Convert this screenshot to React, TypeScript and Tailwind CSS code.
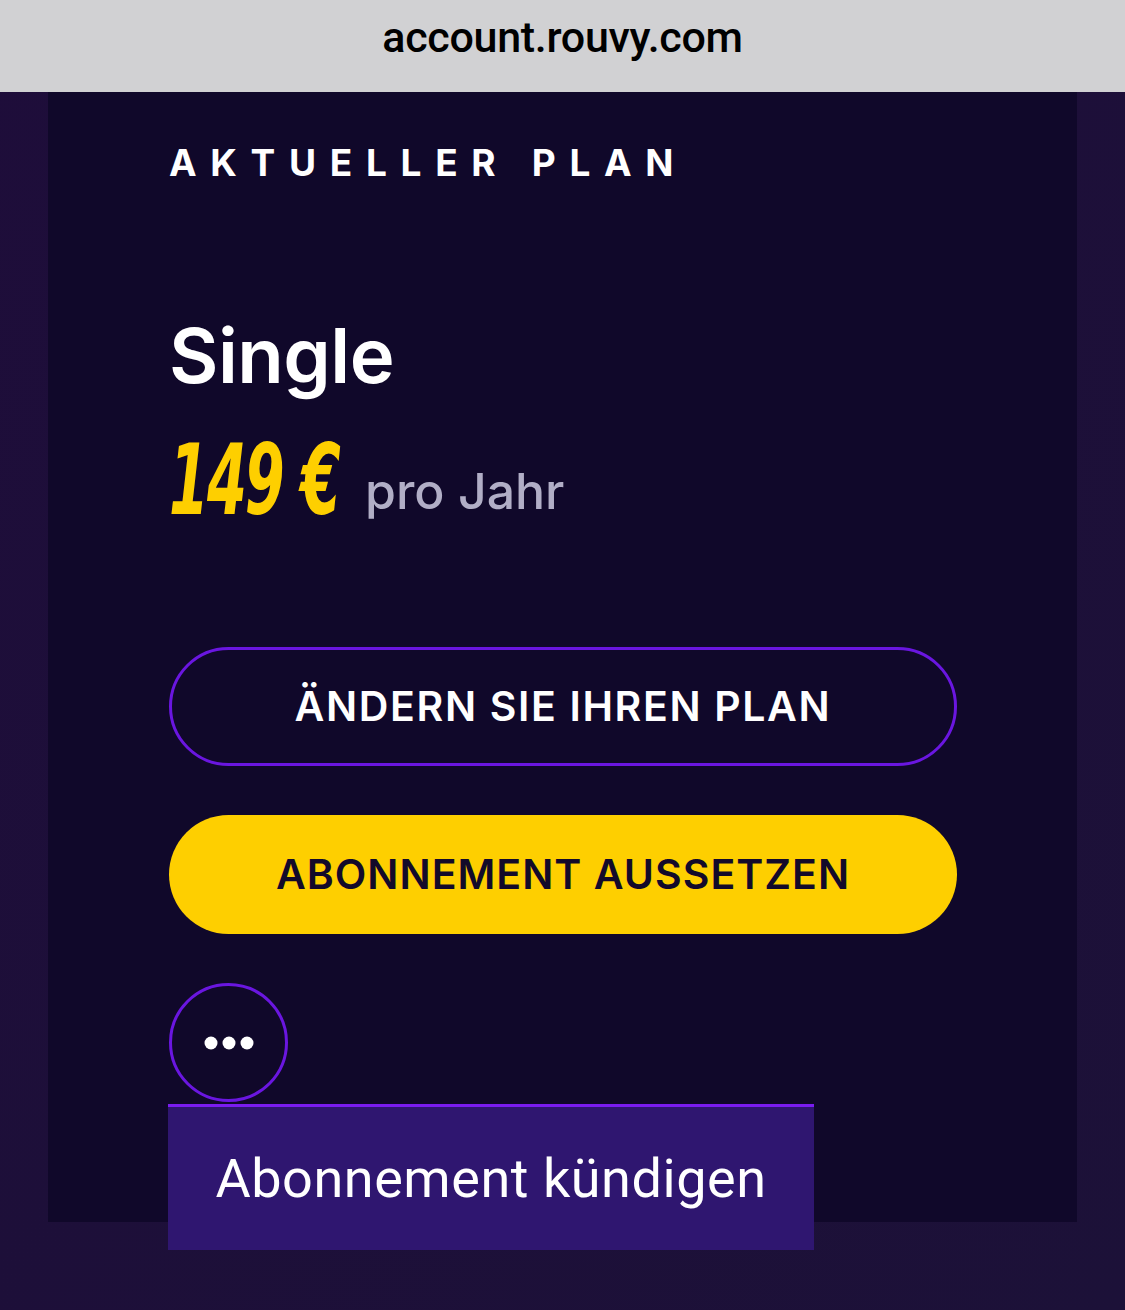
export default function App() {
  return (
    <div
      className="w-[1125px] h-[1310px] flex flex-col bg-gradient-to-br from-[#1e0d3a] to-[#1c1138] overflow-hidden"
      style={{ fontFamily: 'Inter, "Noto Sans", sans-serif' }}
    >
      {/* Adressleiste */}
      <div className="h-[92px] shrink-0 bg-[#d1d1d3] flex items-center justify-center pb-[18px]">
        <span className="text-[43px] font-medium text-black tracking-[-0.3px]" style={{ fontFamily: 'Roboto, sans-serif' }}>
          account.rouvy.com
        </span>
      </div>

      <div className="relative mx-[48px] h-[1130px] bg-[#10082a] px-[121px] pt-[52px]">
        <h2 className="text-[37px] font-bold text-white tracking-[0.37em] leading-none">AKTUELLER PLAN</h2>

        <h1 className="mt-[136px] text-[76px] font-semibold text-white leading-none tracking-[-0.5px]">Single</h1>

        <div className="mt-[38px] flex items-baseline">
          <span
            className="inline-block text-[98px] font-bold italic text-[#fecf00] leading-none tracking-[-3px] origin-left scale-x-[0.65] -mr-[65px]"
            style={{ fontFamily: '"DejaVu Sans Condensed", "Liberation Sans", sans-serif' }}
          >
            149 €
          </span>
          <span className="text-[50px] font-medium text-[#b1aec6] leading-none -translate-y-[5px]">pro Jahr</span>
        </div>

        <div className="mt-[118px] flex flex-col gap-[49px] w-[788px]">
          <button className="h-[119px] rounded-full border-[3px] border-[#6a16e0] text-white text-[41px] font-semibold tracking-[0.04em]">
            ÄNDERN SIE IHREN PLAN
          </button>
          <button className="h-[119px] rounded-full bg-[#fecf00] text-[#130a2a] text-[41px] font-semibold tracking-[0.025em]">
            ABONNEMENT AUSSETZEN
          </button>
        </div>

        <button className="mt-[49px] w-[119px] h-[119px] rounded-full border-[3px] border-[#6a16e0] flex items-center justify-center">
          <svg width="50" height="14" viewBox="0 0 50 14" fill="#ffffff">
            <circle cx="7" cy="7" r="6.5" />
            <circle cx="25" cy="7" r="6.5" />
            <circle cx="43" cy="7" r="6.5" />
          </svg>
        </button>

        {/* Menü */}
        <div className="absolute left-[120px] top-[1012px] w-[646px] h-[146px] bg-[#2f1670] border-t-[3px] border-[#7a1cf0] flex items-center justify-center z-10">
          <span className="text-[54px] text-white tracking-[0.01em]" style={{ fontFamily: 'Roboto, sans-serif' }}>
            Abonnement kündigen
          </span>
        </div>
      </div>
    </div>
  )
}
